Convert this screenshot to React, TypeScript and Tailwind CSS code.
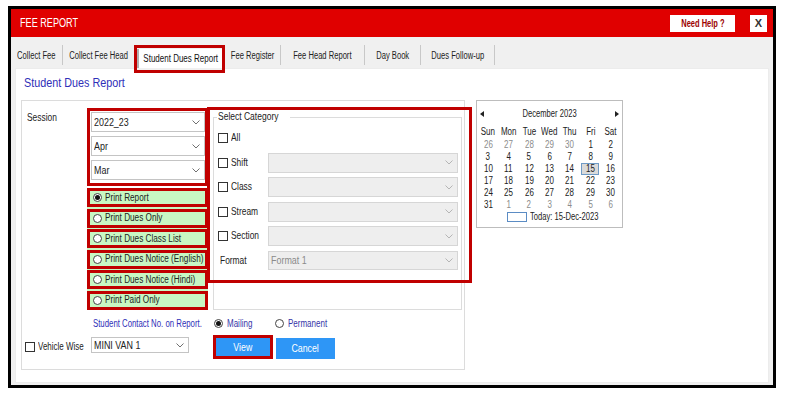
import React from "react";

const font = "font-['Liberation_Sans',Arial,sans-serif]";

const tabs = [
  { label: "Collect Fee", w: "w-[52px]" },
  { label: "Collect Fee Head", w: "w-[71px]" },
  { label: "Student Dues Report", w: "w-[91px]", active: true },
  { label: "Fee Register", w: "w-[56px]" },
  { label: "Fee Head Report", w: "w-[84px]" },
  { label: "Day Book", w: "w-[56px]" },
  { label: "Dues Follow-up", w: "w-[74px]" },
];

const printOptions = [
  { label: "Print Report", checked: true },
  { label: "Print Dues Only" },
  { label: "Print Dues Class List" },
  { label: "Print Dues Notice (English)" },
  { label: "Print Dues Notice (Hindi)" },
  { label: "Print Paid Only" },
];

const categories = ["Shift", "Class", "Stream", "Section"];

// december 2023 grid, muted = other month
const weeks: { d: number; muted?: boolean }[][] = [
  [{ d: 26, muted: true }, { d: 27, muted: true }, { d: 28, muted: true }, { d: 29, muted: true }, { d: 30, muted: true }, { d: 1 }, { d: 2 }],
  [{ d: 3 }, { d: 4 }, { d: 5 }, { d: 6 }, { d: 7 }, { d: 8 }, { d: 9 }],
  [{ d: 10 }, { d: 11 }, { d: 12 }, { d: 13 }, { d: 14 }, { d: 15 }, { d: 16 }],
  [{ d: 17 }, { d: 18 }, { d: 19 }, { d: 20 }, { d: 21 }, { d: 22 }, { d: 23 }],
  [{ d: 24 }, { d: 25 }, { d: 26 }, { d: 27 }, { d: 28 }, { d: 29 }, { d: 30 }],
  [{ d: 31 }, { d: 1, muted: true }, { d: 2, muted: true }, { d: 3, muted: true }, { d: 4, muted: true }, { d: 5, muted: true }, { d: 6, muted: true }],
];

// the screenshot text is horizontally squeezed, so narrow the glyphs
function T({
  children,
  s = "scale-x-[0.8]",
  o = "origin-left",
  className = "",
}: {
  children: React.ReactNode;
  s?: string;
  o?: string;
  className?: string;
}) {
  return <span className={`inline-block whitespace-nowrap ${o} ${s} ${className}`}>{children}</span>;
}

function Chevron({ color = "#707070" }: { color?: string }) {
  return (
    <svg width="8" height="5" viewBox="0 0 8 5" fill="none">
      <path d="M0.5 0.5 L4 4 L7.5 0.5" stroke={color} strokeWidth="1" />
    </svg>
  );
}

function Select({ value, className, disabled }: { value?: string; className: string; disabled?: boolean }) {
  return (
    <div
      className={`flex items-center justify-between border pl-[2px] pr-[3px] ${
        disabled ? "bg-[#eeeeee] border-[#d6d6d6] text-[#8a8a8a]" : "bg-white border-[#c4c4c4] text-[#222]"
      } ${className}`}
    >
      <T s="scale-x-[0.85]" className="text-[10.5px] leading-none">
        {value}
      </T>
      <span className="pr-[1px]">
        <Chevron color={disabled ? "#b5b5b5" : "#707070"} />
      </span>
    </div>
  );
}

function Radio({ checked }: { checked?: boolean }) {
  return (
    <span className="w-[9px] h-[9px] rounded-full border border-[#444] bg-white flex items-center justify-center shrink-0">
      {checked && <span className="w-[5px] h-[5px] rounded-full bg-[#111]" />}
    </span>
  );
}

function Checkbox() {
  return <span className="w-[10px] h-[10px] border border-[#333] bg-white shrink-0" />;
}

export default function App() {
  return (
    <div className={`w-[790px] h-[396px] bg-white pt-[6px] pl-[8px] ${font}`}>
      <div className="w-[768px] h-[382px] border-[3px] border-black bg-[#f0f0f0] flex flex-col">
        {/* Header */}
        <header className="h-[28px] bg-[#e00000] flex items-center pl-[9px] pr-[6px] shrink-0">
          <T s="scale-x-[0.76]" className="text-white text-[12px]">
            FEE REPORT
          </T>
          <button className="ml-auto w-[65px] h-[17px] bg-white text-[#9b0000] text-[10px] font-bold flex items-center justify-center">
            <T s="scale-x-[0.75]" o="origin-center">
              Need Help ?
            </T>
          </button>
          <button className="ml-[15px] w-[17px] h-[17px] bg-white text-[#333] text-[11px] font-bold flex items-center justify-center">
            X
          </button>
        </header>

        {/* Tabs */}
        <nav className="h-[31px] flex items-start pt-[8px] shrink-0">
          {tabs.map((t, i) =>
            t.active ? (
              <div key={t.label} className={`relative z-10 h-[28px] border-[3px] border-[#c00000] bg-[#f0f0f0] ${t.w}`}>
                <div className="h-[19px] mt-[1px] bg-white border-l-2 border-[#b0b0b0] flex items-center justify-center text-[10px] text-[#111]">
                  <T s="scale-x-[0.8]" o="origin-center">
                    {t.label}
                  </T>
                </div>
              </div>
            ) : (
              <div
                key={t.label}
                className={`h-[20px] flex items-center justify-center text-[10px] text-[#222] ${t.w} ${
                  tabs[i + 1]?.active ? "" : "border-r border-[#c8c8c8]"
                }`}
              >
                <T s="scale-x-[0.76]" o="origin-center">
                  {t.label}
                </T>
              </div>
            )
          )}
        </nav>

        {/* Page */}
        <main className="flex-1 mx-[4px] mb-[2px] bg-white border border-[#ececec] pt-[6px] pl-[5px]">
          <h1 className="ml-[3px] text-[13px] leading-[16px] text-[#2f2fb8]">
            <T s="scale-x-[0.83]">Student Dues Report</T>
          </h1>

          <div className="mt-[9px] flex items-start">
            {/* Main group box */}
            <section className="relative w-[444px] h-[270px] border border-[#dcdcdc] flex flex-col">
              <div className="flex items-start">
                <div className="w-[65px] pl-[5px] pt-[9px] text-[10.5px] leading-[14px] text-[#222]">
                  <T>Session</T>
                </div>

                <div className="w-[121px] mt-[7px]">
                  <div className="h-[78px] border-[3px] border-[#c00000] pt-[1px] flex flex-col gap-[4px]">
                    <Select value="2022_23" className="h-[20px] ml-[1px]" />
                    <Select value="Apr" className="h-[20px] ml-[1px]" />
                    <Select value="Mar" className="h-[20px] ml-[1px]" />
                  </div>
                  <div className="mt-[2px] flex flex-col gap-[1.5px] bg-[#c8f7c3]">
                    {printOptions.map((o) => (
                      <div
                        key={o.label}
                        className="h-[19px] border-[3px] border-[#c00000] bg-[#c8f7c3] flex items-center pl-[3px] gap-[3px]"
                      >
                        <Radio checked={o.checked} />
                        <T s="scale-x-[0.82]" className="text-[10px] text-[#222] leading-none">
                          {o.label}
                        </T>
                      </div>
                    ))}
                  </div>
                </div>

                {/* Select Category */}
                <div className="relative ml-[5px] mt-[16px] w-[249px] h-[193px] border border-[#dcdcdc] pl-[4px] pt-[10px] flex flex-col gap-[4.5px]">
                  <span className="absolute left-[3px] -top-[8px] bg-white px-[1px] text-[10px] leading-[14px] text-[#222]">
                    <T s="scale-x-[0.85]">Select Category</T>
                  </span>
                  <div className="h-[20px] flex items-center gap-[3px]">
                    <Checkbox />
                    <T className="text-[10.5px] text-[#222]">All</T>
                  </div>
                  {categories.map((c) => (
                    <div key={c} className="h-[20px] flex items-center">
                      <div className="w-[50px] flex items-center gap-[3px]">
                        <Checkbox />
                        <T className="text-[10.5px] text-[#222]">{c}</T>
                      </div>
                      <Select disabled className="w-[190px] h-[20px]" />
                    </div>
                  ))}
                  <div className="h-[20px] flex items-center">
                    <span className="w-[50px] pl-[2px] text-[10.5px] text-[#222]">
                      <T>Format</T>
                    </span>
                    <Select disabled value="Format 1" className="w-[190px] h-[19px]" />
                  </div>
                </div>
              </div>

              {/* contact row */}
              <div className="mt-[6px] h-[14px] flex items-center">
                <span className="ml-[71px] w-[121px] text-[10px] text-[#2f2fb8]">
                  <T s="scale-x-[0.78]">Student Contact No. on Report.</T>
                </span>
                <span className="w-[61px] flex items-center gap-[4px]">
                  <Radio checked />
                  <T className="text-[10px] text-[#3535a8]">Mailing</T>
                </span>
                <span className="flex items-center gap-[4px]">
                  <Radio />
                  <T className="text-[10px] text-[#3535a8]">Permanent</T>
                </span>
              </div>

              {/* vehicle + buttons */}
              <div className="mt-[5px] h-[24px] flex items-center">
                <div className="w-[69px] pl-[3px] flex items-center gap-[3px]">
                  <Checkbox />
                  <T s="scale-x-[0.76]" className="text-[10.5px] text-[#222]">
                    Vehicle Wise
                  </T>
                </div>
                <Select value="MINI VAN 1" className="w-[98px] h-[16px] -mt-[4px]" />
                <button className="ml-[24px] w-[60px] h-[24px] border-[3px] border-[#c00000] bg-[#2e96f6] text-white text-[11px] flex items-center justify-center">
                  <T o="origin-center">View</T>
                </button>
                <button className="ml-[3px] self-end w-[59px] h-[21px] bg-[#2e96f6] text-white text-[11px] flex items-center justify-center">
                  <T o="origin-center">Cancel</T>
                </button>
              </div>

              {/* annotation box over category */}
              <div className="absolute left-[185px] top-[6px] w-[265px] h-[176px] border-[3px] border-[#c00000] pointer-events-none" />
            </section>

            {/* Calendar */}
            <section className="ml-[11px] w-[147px] h-[128px] border border-[#bdbdbd] pt-[6px] text-[10px] leading-[12px]">
              <div className="h-[14px] flex items-center px-[3px]">
                <svg width="4" height="6" viewBox="0 0 4 6">
                  <path d="M4 0 L0 3 L4 6 Z" fill="#222" />
                </svg>
                <span className="flex-1 text-center text-[#222]">
                  <T s="scale-x-[0.76]" o="origin-center">
                    December 2023
                  </T>
                </span>
                <svg width="4" height="6" viewBox="0 0 4 6">
                  <path d="M0 0 L4 3 L0 6 Z" fill="#222" />
                </svg>
              </div>
              <div className="mt-[5px] grid grid-cols-7 px-[1px] text-[#222]">
                {["Sun", "Mon", "Tue", "Wed", "Thu", "Fri", "Sat"].map((d) => (
                  <span key={d} className="h-[13px] flex justify-center">
                    <T s="scale-x-[0.8]" o="origin-center">
                      {d}
                    </T>
                  </span>
                ))}
                {weeks.flat().map((c, i) => (
                  <span key={i} className="h-[12px] flex items-center justify-center">
                    <span
                      className={`h-[12px] flex items-center justify-center ${
                        c.d === 15 && !c.muted ? "w-[18px] bg-[#dadada] border border-[#6f9bc6]" : ""
                      } ${c.muted ? "text-[#8c8c8c]" : "text-[#222]"}`}
                    >
                      <T s="scale-x-[0.8]" o="origin-center">
                        {c.d}
                      </T>
                    </span>
                  </span>
                ))}
              </div>
              <div className="h-[12px] flex items-center justify-center gap-[3px] pl-[8px]">
                <span className="w-[20px] h-[10px] border border-[#5b8cc4] shrink-0" />
                <span className="w-[70px] text-[#222]">
                  <T s="scale-x-[0.76]">Today: 15-Dec-2023</T>
                </span>
              </div>
            </section>
          </div>
        </main>
      </div>
    </div>
  );
}
